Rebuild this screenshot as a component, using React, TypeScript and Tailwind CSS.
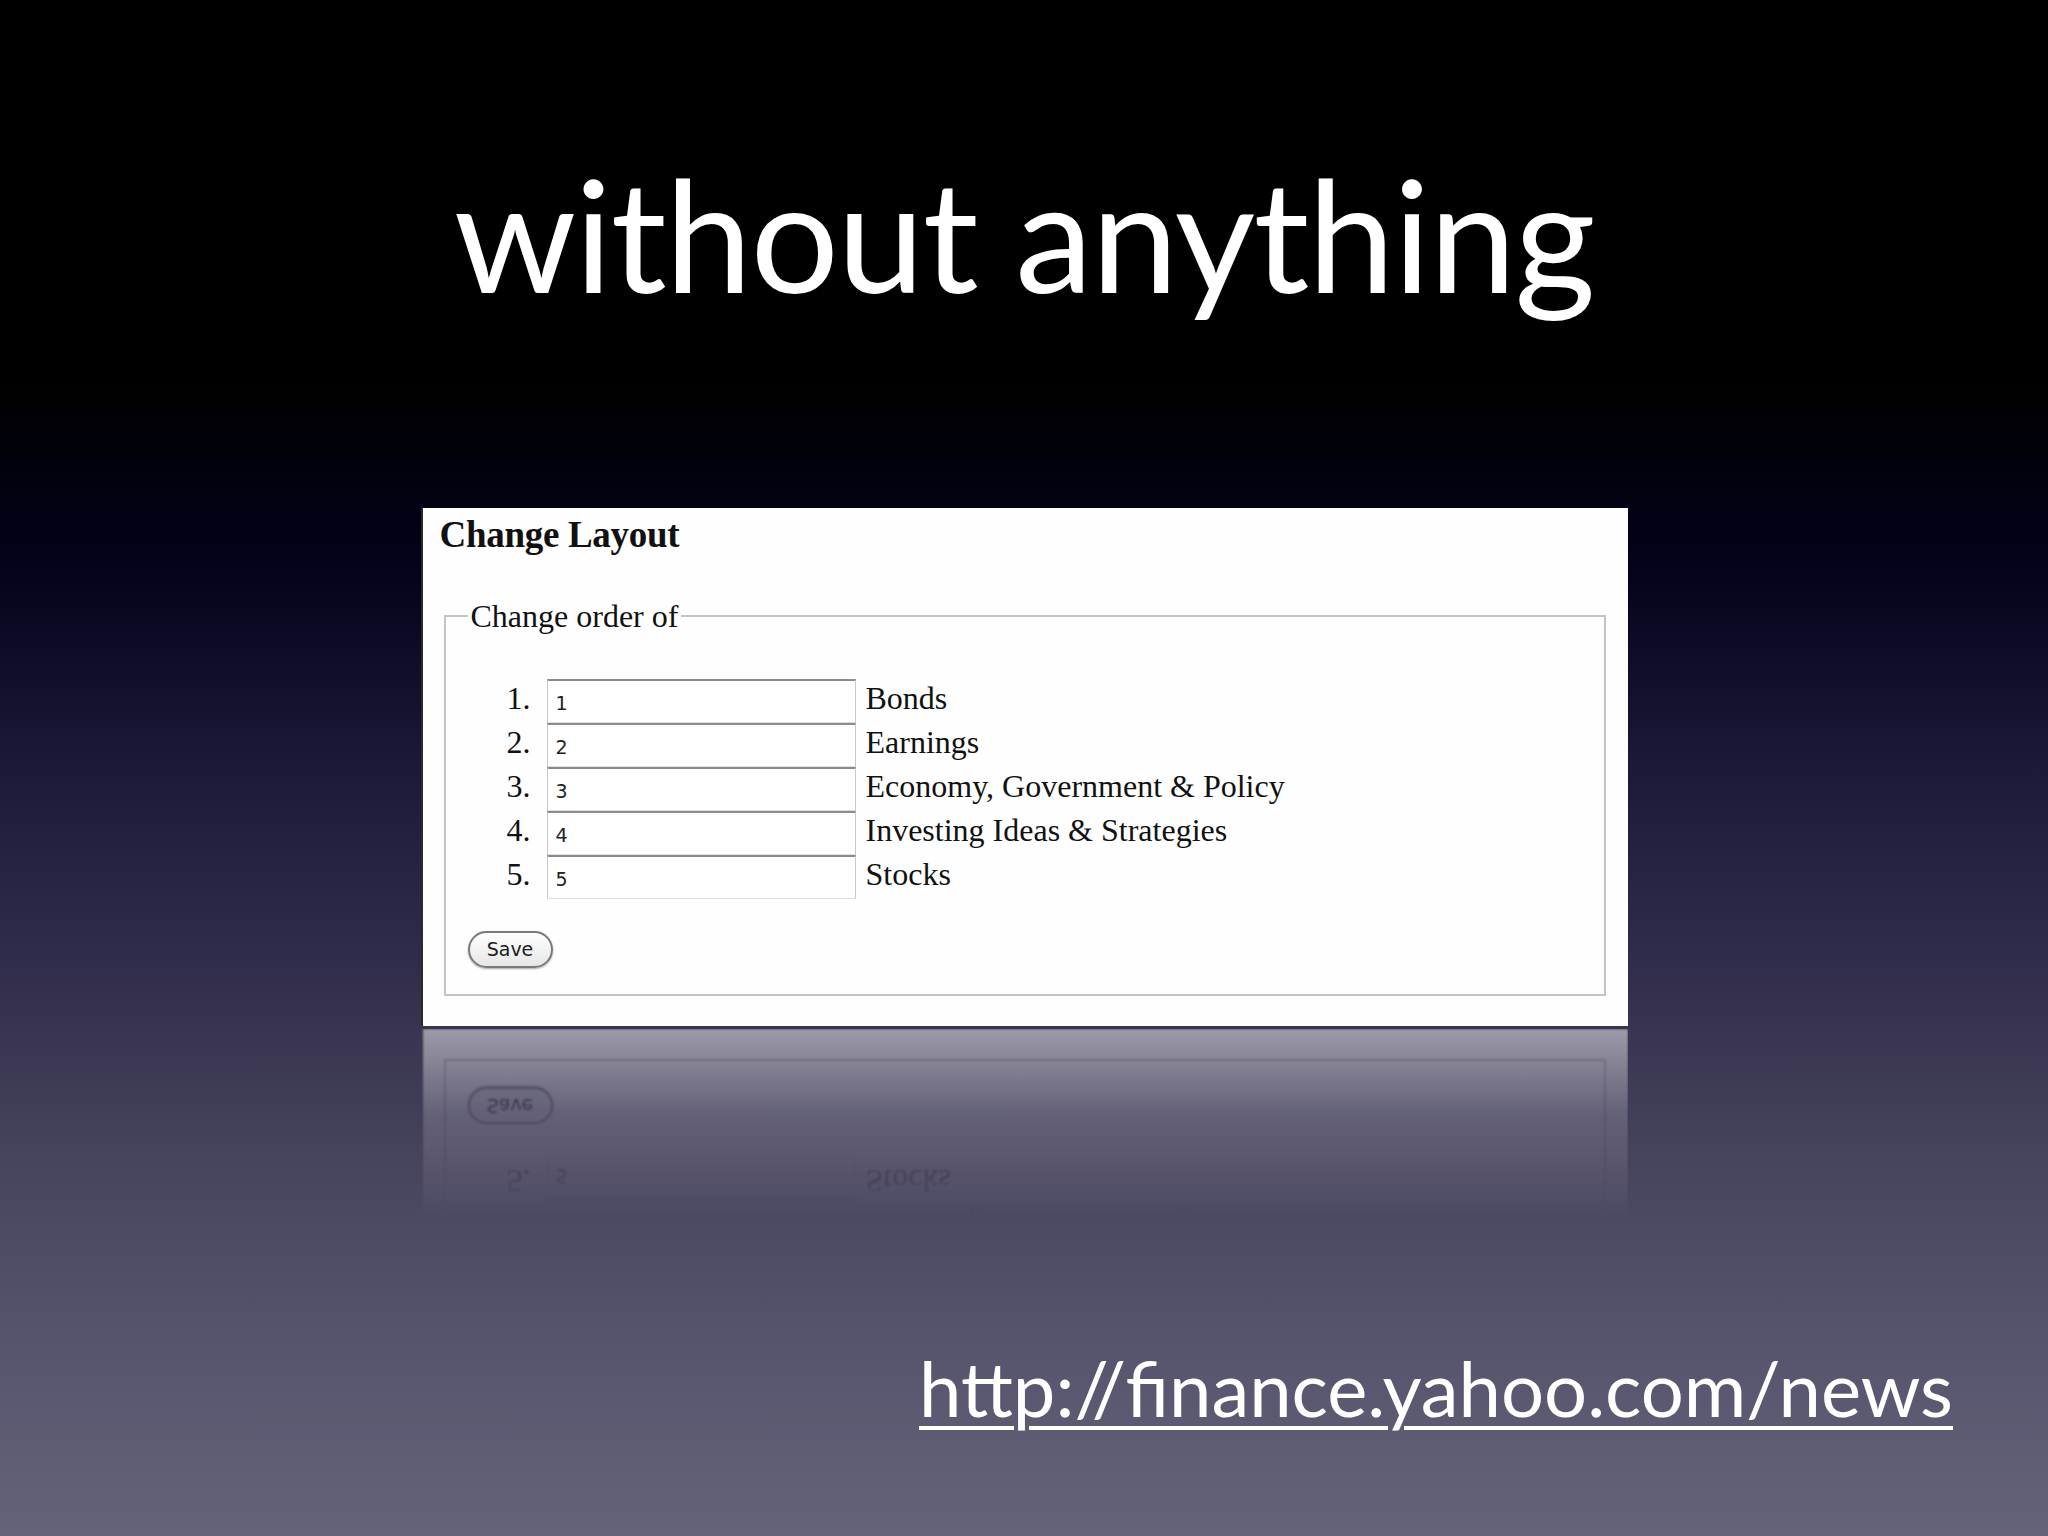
const topics = [
  { n: 1, label: "Bonds" },
  { n: 2, label: "Earnings" },
  { n: 3, label: "Economy, Government & Policy" },
  { n: 4, label: "Investing Ideas & Strategies" },
  { n: 5, label: "Stocks" },
];

const serif = "font-['Liberation_Serif','Times_New_Roman',serif]";
const uiSans = "font-['DejaVu_Sans','Lucida_Grande',sans-serif]";

// the captured web form shown on the slide
function LayoutForm() {
  return (
    <div className={`h-[518px] w-[1207px] bg-[#fefefe] border-l-2 border-[#2a2a2a] pl-[17px] pr-[22px] pt-[5px] text-[#111] ${serif}`}>
      <h2 className="text-[37px] font-bold leading-[44px] tracking-[-0.3px]">Change Layout</h2>
      <fieldset className="ml-[4px] mt-[39px] border-2 border-[#c4c4c4] pt-[43px] pb-[26px]">
        <legend className="ml-[22px] px-[3px] text-[32px] leading-[40px]">Change order of</legend>
        <div className="flex flex-col">
          {topics.map((t) => (
            <div key={t.n} className="flex h-[44px] items-center">
              <span className="w-[85px] pb-[7px] text-right text-[32px] leading-none">{t.n}.</span>
              <div className={`ml-[16px] flex h-[44px] w-[309px] items-center border-t-2 border-t-[#8c8c8c] border-x border-x-[#c9c9c9] border-b border-b-[#dedede] bg-white pl-[8px] pt-[4px] text-[19px] text-[#222] ${uiSans}`}>
                {t.n}
              </div>
              <span className="ml-[10px] pb-[7px] text-[32px] leading-none">{t.label}</span>
            </div>
          ))}
        </div>
        <button
          type="button"
          className={`ml-[22px] mt-[32px] flex h-[37px] w-[85px] items-center justify-center rounded-full border-2 border-[#7a7a7a] bg-gradient-to-b from-white to-[#e6e6e6] text-[19px] text-[#1c1c1c] shadow-[0_1px_2px_rgba(0,0,0,0.35)] ${uiSans}`}
        >
          Save
        </button>
      </fieldset>
    </div>
  );
}

export default function App() {
  return (
    <div className="flex h-[1536px] w-[2048px] flex-col overflow-hidden bg-[linear-gradient(to_bottom,#000_0%,#000_25%,#03031c_37%,#1b1737_49%,#2f2b4a_62%,#46435d_75%,#57556d_88%,#64637a_100%)] font-['Lato',sans-serif]">
      <h1 className="pt-[155px] text-center text-[156px] leading-none tracking-[-1.6px] text-white">without anything</h1>

      <div className="mx-auto mt-[197px]">
        <LayoutForm />
        {/* mirrored copy fading into the floor */}
        <div className="mt-[3px] h-[190px] overflow-hidden opacity-60 blur-[0.8px] [mask-image:linear-gradient(to_bottom,rgba(0,0,0,0.85),rgba(0,0,0,0.3)_45%,transparent_100%)]">
          <div className="-scale-y-100">
            <LayoutForm />
          </div>
        </div>
      </div>

      <div className="mt-[131px] flex justify-end pr-[95px]">
        <span className="text-[76px] leading-none text-white underline decoration-[4px] underline-offset-[9px]">
          http://finance.yahoo.com/news
        </span>
      </div>
    </div>
  );
}
